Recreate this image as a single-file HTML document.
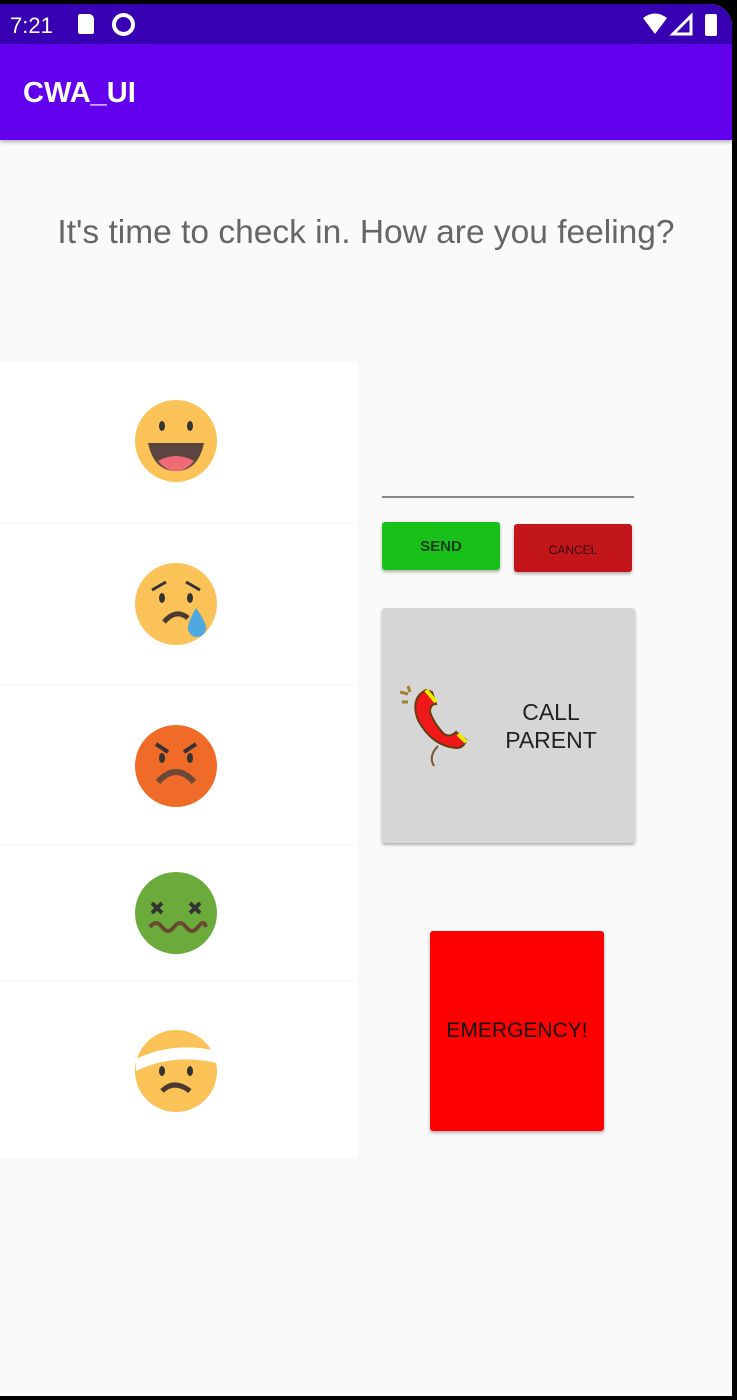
<!DOCTYPE html><html><head><style>
*{margin:0;padding:0;box-sizing:border-box}
body{width:737px;height:1400px;background:#000;position:relative;overflow:hidden;font-family:"Liberation Sans",sans-serif}
.scr{position:absolute;left:0;top:4px;width:732px;height:1392px;background:#fafafa;border-radius:0 22px 0 0;overflow:hidden}
.sb{position:absolute;left:0;top:0;width:732px;height:40px;background:#3700b3;color:#fff}
.ab{position:absolute;left:0;top:40px;width:732px;height:96px;background:#6200ee;box-shadow:0 2px 4px rgba(0,0,0,.3)}
.ab span{position:absolute;left:23px;top:33px;font-size:29px;font-weight:bold;color:#fff}
.q{position:absolute;left:0;width:732px;top:210px;text-align:center;font-size:33.5px;color:#666}
.row{position:absolute;left:0;width:358px;background:#fff}
.f{position:absolute;left:134px;width:84px;height:84px}
.btn{position:absolute;border-radius:3px;box-shadow:0 2px 3px rgba(0,0,0,.3);display:flex;align-items:center;justify-content:center;color:#111}
</style></head><body>
<div class="scr">
<div class="sb">
<span style="position:absolute;left:10px;top:9px;font-size:22px">7:21</span>
<div style="position:absolute;left:78px;top:10px;width:16px;height:20px;background:#fff;border-radius:2px 5px 2px 2px"></div>
<div style="position:absolute;left:112px;top:9px;width:23px;height:23px;border:4px solid #fff;border-radius:50%"></div>
<svg style="position:absolute;left:643px;top:8px" width="80" height="26"><path d="M0 6 Q12 -3 24 6 L12 22Z" fill="#fff"/><path d="M30 22 L48 4 L48 22Z" fill="none" stroke="#fff" stroke-width="3"/><rect x="62" y="2" width="12" height="22" rx="2" fill="#fff"/></svg>
</div>
<div class="ab"><span>CWA_UI</span></div>
<div class="q">It's time to check in. How are you feeling?</div>
<div class="row" style="top:358px;height:160px"></div>
<div class="row" style="top:520px;height:160px"></div>
<div class="row" style="top:682px;height:158px"></div>
<div class="row" style="top:842px;height:134px"></div>
<div class="row" style="top:978px;height:176px"></div>
<svg class="f" style="top:395px" viewBox="0 0 84 84"><circle cx="42" cy="42" r="41" fill="#fbc257"/><ellipse cx="28" cy="27" rx="3" ry="5" fill="#333"/><ellipse cx="56" cy="27" rx="3" ry="5" fill="#333"/><path d="M14 44 H70 Q64 72 42 72 Q20 72 14 44Z" fill="#5a4540"/><path d="M24 62 Q42 52 60 62 Q52 72 42 72 Q32 72 24 62Z" fill="#f06a75"/></svg>
<svg class="f" style="top:558px" viewBox="0 0 84 84"><circle cx="42" cy="42" r="41" fill="#fbc257"/><path d="M18 28 L32 20 M52 20 L66 28" stroke="#333" stroke-width="3"/><ellipse cx="28" cy="36" rx="3" ry="5" fill="#333"/><ellipse cx="56" cy="36" rx="3" ry="5" fill="#333"/><path d="M30 60 Q42 46 54 56" stroke="#4a3a30" stroke-width="5" fill="none"/><path d="M62 46 Q54 60 54 66 A9 9 0 0 0 72 66 Q72 60 62 46Z" fill="#4fa8df"/></svg>
<svg class="f" style="top:720px" viewBox="0 0 84 84"><circle cx="42" cy="42" r="41" fill="#f06a28"/><path d="M22 20 L34 28 M62 20 L50 28" stroke="#333" stroke-width="4"/><ellipse cx="28" cy="34" rx="3" ry="5" fill="#333"/><ellipse cx="56" cy="34" rx="3" ry="5" fill="#333"/><path d="M24 58 Q42 38 60 58" stroke="#6a4a35" stroke-width="6" fill="none"/></svg>
<svg class="f" style="top:867px" viewBox="0 0 84 84"><circle cx="42" cy="42" r="41" fill="#6aab3c"/><path d="M18 32 L28 42 M28 32 L18 42 M56 32 L66 42 M66 32 L56 42" stroke="#333" stroke-width="4"/><path d="M16 56 q6 -8 12 0 t12 0 t12 0 t12 0 t8 0" stroke="#6a4a30" stroke-width="4" fill="none"/></svg>
<svg class="f" style="top:1025px" viewBox="0 0 84 84"><circle cx="42" cy="42" r="41" fill="#fbc257"/><path d="M2 30 Q40 12 82 22 L82 34 Q40 24 2 42Z" fill="#fff"/><ellipse cx="28" cy="42" rx="3" ry="5" fill="#333"/><ellipse cx="56" cy="42" rx="3" ry="5" fill="#333"/><path d="M28 62 Q40 50 56 62" stroke="#4a3a30" stroke-width="5" fill="none"/></svg>
<div style="position:absolute;left:382px;top:492px;width:252px;height:2px;background:#888"></div>
<div class="btn" style="left:382px;top:518px;width:118px;height:48px;background:#17c117;font-size:15px;font-weight:bold;color:#1a3a1a">SEND</div>
<div class="btn" style="left:514px;top:520px;width:118px;height:48px;background:#c3161b;font-size:12px;padding-top:4px;color:#300">CANCEL</div>
<div class="btn" style="left:382px;top:604px;width:253px;height:235px;background:#d6d6d6"></div>
<svg style="position:absolute;left:398px;top:680px" width="75" height="90" viewBox="0 0 75 90"><path d="M28 6 Q12 14 20 36 Q34 62 58 64 Q66 64 68 56 L58 48 Q52 54 46 50 Q36 40 32 28 Q32 20 38 20 L34 8Z" fill="#f01818" stroke="#6a3a10" stroke-width="2"/><path d="M28 6 L38 18 M60 50 L68 58" stroke="#ee0" stroke-width="4"/><path d="M40 62 Q30 72 36 82" stroke="#7a5a3a" stroke-width="2" fill="none"/><path d="M2 8 L10 10 M4 18 L10 18 M10 2 L12 8" stroke="#a08030" stroke-width="3"/></svg>
<div style="position:absolute;left:480px;top:694px;width:142px;text-align:center;font-size:23px;line-height:28px;color:#222">CALL<br>PARENT</div>
<div class="btn" style="left:430px;top:927px;width:174px;height:200px;background:#ff0000;font-size:21px">EMERGENCY!</div>
</div>
</body></html>
